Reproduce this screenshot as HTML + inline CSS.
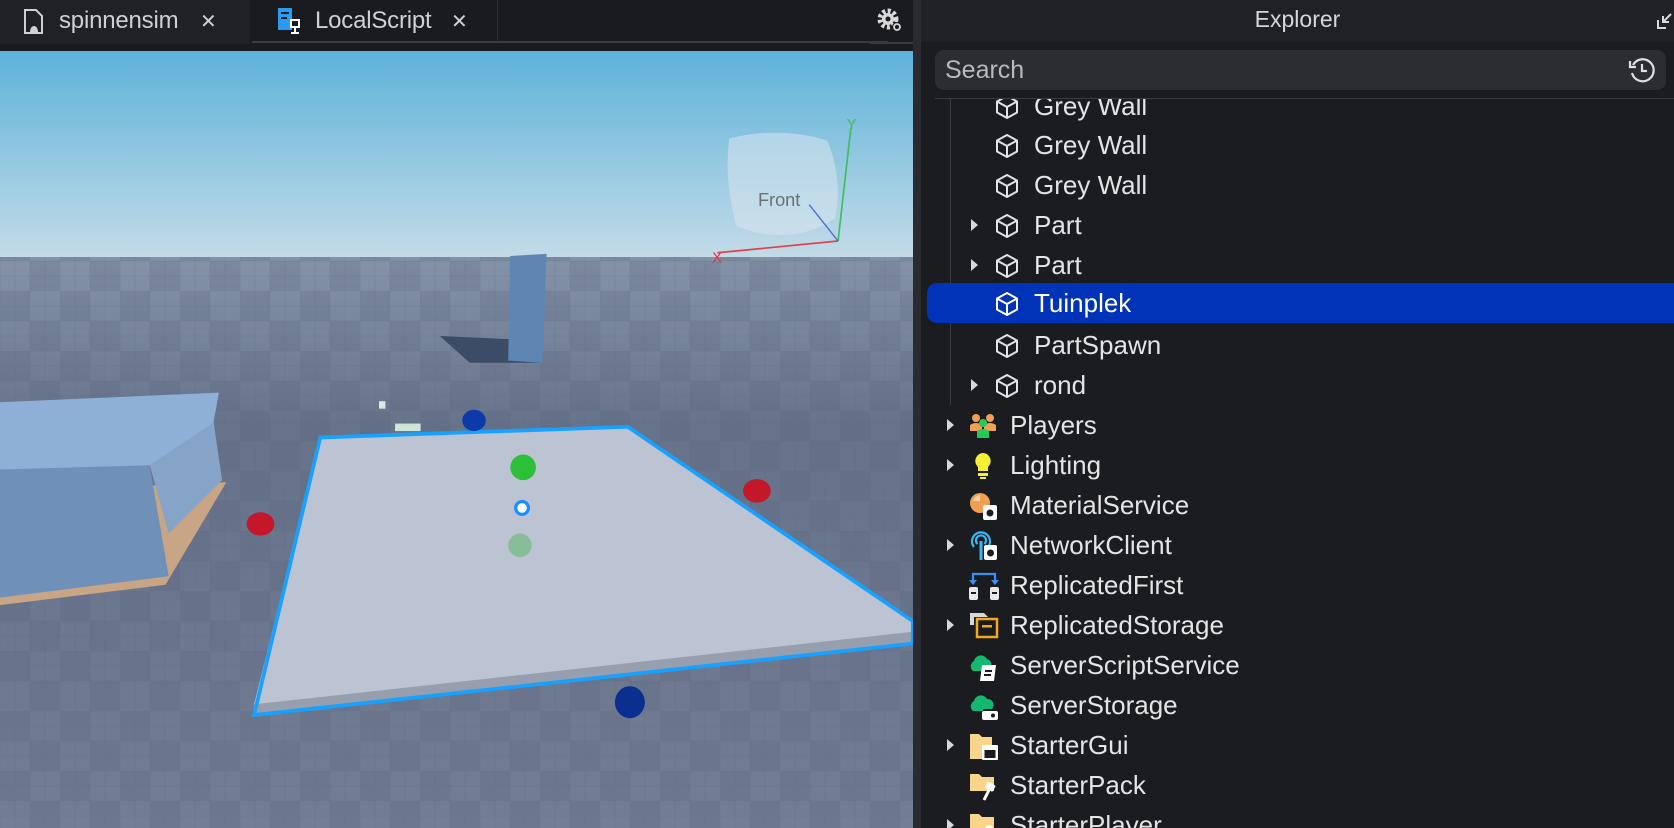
<!DOCTYPE html>
<html><head><meta charset="utf-8"><style>
*{margin:0;padding:0;box-sizing:border-box}
body{width:1674px;height:828px;overflow:hidden;background:#1b1c20;font-family:"Liberation Sans",sans-serif;color:#e6e6e8;position:relative}
.tabbar{position:absolute;left:0;top:0;width:916px;height:51px;background:#1a1b1f}
.tab1{position:absolute;left:0;top:0;width:250px;height:44px;background:#202126}
.tabline{position:absolute;left:252px;top:41px;width:636px;height:2px;background:#3a3b40}
.tabline2{position:absolute;left:870px;top:42px;width:44px;height:2px;background:#3a3b40}
.tt{position:absolute;top:7px;font-size:24px;color:#cfd0d4;letter-spacing:-0.2px}
.vp{position:absolute;left:0;top:51px;width:913px;height:777px}
.sep{position:absolute;left:913px;top:0;width:8px;height:828px;background:#2a2b30}
.ex{position:absolute;left:921px;top:0;width:753px;height:828px;background:#1b1c20}
.exh{position:absolute;left:0;top:0;width:753px;height:42px;background:#202126;text-align:center;font-size:23px;line-height:38px;color:#d6d6da}
.search{position:absolute;left:14px;top:50px;width:731px;height:40px;background:#2c2d33;border-radius:9px;font-size:25px;line-height:40px;padding-left:10px;color:#b8b9bd}
.div{position:absolute;left:14px;top:98px;width:739px;height:1px;background:#3a3b40}
.guide{position:absolute;left:29px;top:99px;width:1px;height:306px;background:#3a3b40}
.row{position:absolute;left:0;height:40px;width:753px;font-size:26px;line-height:40px;color:#e4e4e6;letter-spacing:0}
.sel{background:#0033b8;border-radius:10px 0 0 10px;left:6px;width:747px}
.row .t{position:absolute;top:0}
.row svg{position:absolute}
.arr{position:absolute;width:0;height:0;border-top:6px solid transparent;border-bottom:6px solid transparent;border-left:7px solid #d8d8da;top:14px}
</style></head><body>
<div class="tabbar"></div>
<div class="tab1"></div>
<div class="tabline"></div><div class="tabline2"></div>
<svg style="position:absolute;left:22px;top:8px" width="24" height="28" viewBox="0 0 24 28"><path d="M3 2h11l6 6v17H3z" fill="none" stroke="#d0d0d4" stroke-width="2"/><path d="M8 24c0-4 2-6 4-6s4 2 4 6z" fill="#d0d0d4"/></svg>
<div class="tt" style="left:59px">spinnensim</div>
<div class="tt" style="left:200px;font-size:20px;top:9px">✕</div>
<svg style="position:absolute;left:276px;top:6px" width="30" height="30" viewBox="0 0 30 30"><rect x="2" y="2" width="14" height="22" fill="#2a9bf0"/><rect x="5" y="6" width="8" height="2" fill="#1a1b1f"/><rect x="5" y="11" width="6" height="2" fill="#1a1b1f"/><rect x="14" y="13" width="10" height="9" fill="#fff"/><rect x="16" y="15" width="6" height="5" fill="#1a1b1f"/><rect x="18" y="22" width="2" height="5" fill="#fff"/><rect x="15" y="26" width="8" height="2" fill="#fff"/></svg>
<div class="tt" style="left:315px">LocalScript</div>
<div class="tt" style="left:451px;font-size:20px;top:9px">✕</div>
<div style="position:absolute;left:497px;top:0;width:1px;height:42px;background:#2e2f34"></div>
<svg style="position:absolute;left:876px;top:6px" width="30" height="28" viewBox="0 0 30 28"><circle cx="12" cy="13" r="8" fill="none" stroke="#d8d8da" stroke-width="5" stroke-dasharray="3 2.3"/><circle cx="12" cy="13" r="6" fill="#d8d8da"/><circle cx="12" cy="13" r="2.5" fill="#1a1b1f"/><circle cx="21" cy="21" r="5" fill="#1a1b1f"/><circle cx="21" cy="21" r="3" fill="none" stroke="#d8d8da" stroke-width="1.8"/></svg>

<svg class="vp" viewBox="0 0 913 777">
<defs>
<linearGradient id="sky" x1="0" y1="0" x2="0" y2="1"><stop offset="0" stop-color="#5eb2da"/><stop offset="1" stop-color="#c3dbe7"/></linearGradient>
<linearGradient id="gr" x1="0" y1="0" x2="0" y2="1"><stop offset="0" stop-color="#8593a8"/><stop offset="0.3" stop-color="#66738a"/><stop offset="1" stop-color="#737d94"/></linearGradient>
<pattern id="grid" width="60" height="60" patternUnits="userSpaceOnUse"><rect width="30" height="30" fill="#55617a" opacity="0.35"/><rect x="30" y="30" width="30" height="30" fill="#55617a" opacity="0.35"/><path d="M0 0H60M0 15H60M0 30H60M0 45H60M0 0V60M15 0V60M30 0V60M45 0V60" stroke="#5a6680" stroke-width="1" opacity="0.35"/></pattern>
</defs>
<rect width="913" height="206" fill="url(#sky)"/>
<rect y="206" width="913" height="571" fill="url(#gr)"/>
<rect y="206" width="913" height="571" fill="url(#grid)" opacity="0.6"/>
<g transform="translate(0,-51.25) scale(1.0676)">
<polygon points="0,470 140,455 212,452 155,548 0,567" fill="#c7a585"/>
<polygon points="0,440 140,435 158,540 0,560" fill="#6f90b8"/>
<polygon points="140,435 200,395 208,450 158,500" fill="#86a4c8"/>
<polygon points="0,377 205,368 200,396 140,436 0,440" fill="#8fb0d6"/>
<polygon points="412,315 478,318 505,340 440,340" fill="#3c4b66"/>
<polygon points="478,240 512,238 508,340 476,338" fill="#5f85b3"/>
<rect x="355" y="376" width="6" height="7" fill="#d8ecdf"/>
<rect x="370" y="397" width="24" height="7" fill="#cfe6d6"/>
<polygon points="238,660 855,590 855,603 238,670" fill="#979fae"/>
<polygon points="300,410 588,400 855,582 855,592 238,660" fill="#bcc3d3"/>
<polygon points="300,410 588,400 855,582 855,603 238,670" fill="none" stroke="#17a2ff" stroke-width="3.5"/>
<ellipse cx="444" cy="394" rx="11" ry="10" fill="#0c3aa8"/>
<circle cx="490" cy="438" r="12" fill="#2cbf38"/>
<circle cx="489" cy="476" r="6" fill="#fff" stroke="#1a8fff" stroke-width="3"/>
<circle cx="487" cy="511" r="11" fill="#87bd98"/>
<ellipse cx="244" cy="491" rx="13" ry="11" fill="#c4172a"/>
<ellipse cx="709" cy="460" rx="13" ry="11" fill="#c4172a"/>
<ellipse cx="590" cy="658" rx="14" ry="15" fill="#0a2f8f"/>
<path d="M683 130 Q730 118 775 132 Q790 170 782 205 Q740 232 690 212 Q678 170 683 130z" fill="#d8e6ee" opacity="0.55"/>
<text x="710" y="193" font-size="17" fill="#6b6f76" font-family="Liberation Sans">Front</text>
<line x1="672" y1="237" x2="785" y2="226" stroke="#e04050" stroke-width="1.6"/>
<line x1="785" y1="226" x2="797" y2="120" stroke="#3ec060" stroke-width="1.6"/>
<line x1="785" y1="226" x2="758" y2="192" stroke="#5070d0" stroke-width="1.3"/>
<text x="667" y="246" font-size="14" fill="#e03040">X</text>
<text x="793" y="121" font-size="14" fill="#3ec060">Y</text>
</g>
</svg>
<div class="sep"></div>

<div class="ex">
<div class="exh">Explorer</div>
<svg style="position:absolute;right:2px;top:12px" width="16" height="18" viewBox="0 0 16 18"><path d="M2 8v8h8" fill="none" stroke="#d8d8da" stroke-width="2"/><path d="M15 2L7 10M7 4v6h6" fill="none" stroke="#d8d8da" stroke-width="2"/></svg>
<div class="search">Search
<svg style="position:absolute;right:10px;top:6px" width="28" height="28" viewBox="0 0 28 28"><path d="M5 9A11 11 0 1 1 4 17" fill="none" stroke="#e0e0e2" stroke-width="2.2"/><path d="M2 5v6h6" fill="none" stroke="#e0e0e2" stroke-width="2.2"/><path d="M14 8v7h5" fill="none" stroke="#e0e0e2" stroke-width="2.2"/></svg></div>
<div class="div"></div>
<div class="guide"></div>

<div style="position:absolute;left:0;top:99px;width:753px;height:729px;overflow:hidden">
<div style="position:relative;top:-99px">
<div class="row" style="top:86px"><svg style="left:74px;top:8px" width="24" height="26" viewBox="0 0 24 26"><path d="M12 2L22 7.5V18.5L12 24L2 18.5V7.5z M2 7.5L12 13L22 7.5 M12 13V24" fill="none" stroke="#e4e4e6" stroke-width="2" stroke-linejoin="round"/></svg><span class="t" style="left:113px">Grey Wall</span></div>
<div class="row" style="top:125px"><svg style="left:74px;top:8px" width="24" height="26" viewBox="0 0 24 26"><path d="M12 2L22 7.5V18.5L12 24L2 18.5V7.5z M2 7.5L12 13L22 7.5 M12 13V24" fill="none" stroke="#e4e4e6" stroke-width="2" stroke-linejoin="round"/></svg><span class="t" style="left:113px">Grey Wall</span></div>
<div class="row" style="top:165px"><svg style="left:74px;top:8px" width="24" height="26" viewBox="0 0 24 26"><path d="M12 2L22 7.5V18.5L12 24L2 18.5V7.5z M2 7.5L12 13L22 7.5 M12 13V24" fill="none" stroke="#e4e4e6" stroke-width="2" stroke-linejoin="round"/></svg><span class="t" style="left:113px">Grey Wall</span></div>
<div class="row" style="top:205px"><div class="arr" style="left:50px"></div><svg style="left:74px;top:8px" width="24" height="26" viewBox="0 0 24 26"><path d="M12 2L22 7.5V18.5L12 24L2 18.5V7.5z M2 7.5L12 13L22 7.5 M12 13V24" fill="none" stroke="#e4e4e6" stroke-width="2" stroke-linejoin="round"/></svg><span class="t" style="left:113px">Part</span></div>
<div class="row" style="top:245px"><div class="arr" style="left:50px"></div><svg style="left:74px;top:8px" width="24" height="26" viewBox="0 0 24 26"><path d="M12 2L22 7.5V18.5L12 24L2 18.5V7.5z M2 7.5L12 13L22 7.5 M12 13V24" fill="none" stroke="#e4e4e6" stroke-width="2" stroke-linejoin="round"/></svg><span class="t" style="left:113px">Part</span></div>
<div class="row sel" style="top:283px"><svg style="left:68px;top:8px" width="24" height="26" viewBox="0 0 24 26"><path d="M12 2L22 7.5V18.5L12 24L2 18.5V7.5z M2 7.5L12 13L22 7.5 M12 13V24" fill="none" stroke="#fff" stroke-width="2" stroke-linejoin="round"/></svg><span class="t" style="left:107px;color:#fff">Tuinplek</span></div>
<div class="row" style="top:325px"><svg style="left:74px;top:8px" width="24" height="26" viewBox="0 0 24 26"><path d="M12 2L22 7.5V18.5L12 24L2 18.5V7.5z M2 7.5L12 13L22 7.5 M12 13V24" fill="none" stroke="#e4e4e6" stroke-width="2" stroke-linejoin="round"/></svg><span class="t" style="left:113px">PartSpawn</span></div>
<div class="row" style="top:365px"><div class="arr" style="left:50px"></div><svg style="left:74px;top:8px" width="24" height="26" viewBox="0 0 24 26"><path d="M12 2L22 7.5V18.5L12 24L2 18.5V7.5z M2 7.5L12 13L22 7.5 M12 13V24" fill="none" stroke="#e4e4e6" stroke-width="2" stroke-linejoin="round"/></svg><span class="t" style="left:113px">rond</span></div>

<div class="row" style="top:405px"><div class="arr" style="left:26px"></div><svg style="left:48px;top:8px" width="28" height="26" viewBox="0 0 28 26"><circle cx="7" cy="5" r="4" fill="#f0a050"/><circle cx="21" cy="5" r="4" fill="#f0a050"/><path d="M1 18v-6q6-4 12 0v6z M15 18v-6q6-4 12 0v6z" fill="#f0a050"/><circle cx="14" cy="10" r="4" fill="#22cc55"/><path d="M8 25v-7q6-4 12 0v7z" fill="#22cc55"/></svg><span class="t" style="left:89px">Players</span></div>
<div class="row" style="top:445px"><div class="arr" style="left:26px"></div><svg style="left:48px;top:6px" width="28" height="30" viewBox="0 0 28 30"><path d="M14 2a8 8 0 0 0-5 14v4h10v-4a8 8 0 0 0-5-14z" fill="#f5f035"/><rect x="9" y="22" width="10" height="3" fill="#f5f035"/><rect x="11" y="26" width="6" height="2" fill="#f5f035"/></svg><span class="t" style="left:89px">Lighting</span></div>
<div class="row" style="top:485px"><svg style="left:48px;top:6px" width="30" height="30" viewBox="0 0 30 30"><circle cx="11" cy="12" r="10" fill="#f0a050"/><path d="M11 4a8 8 0 0 0-7 6h7z" fill="#fff" opacity="0.5"/><rect x="14" y="14" width="14" height="15" rx="2" fill="#fff"/><circle cx="21" cy="22" r="3.5" fill="#1b1c20"/></svg><span class="t" style="left:89px">MaterialService</span></div>
<div class="row" style="top:525px"><div class="arr" style="left:26px"></div><svg style="left:48px;top:6px" width="30" height="30" viewBox="0 0 30 30"><path d="M5 16a9 9 0 1 1 14 0 M8.5 13a5 5 0 1 1 7 0" fill="none" stroke="#38b8f0" stroke-width="2.2"/><rect x="10.5" y="10" width="3" height="19" fill="#38b8f0"/><rect x="15" y="14" width="13" height="15" rx="2" fill="#fff"/><circle cx="21.5" cy="22" r="3.5" fill="#1b1c20"/></svg><span class="t" style="left:89px">NetworkClient</span></div>
<div class="row" style="top:565px"><svg style="left:48px;top:6px" width="30" height="30" viewBox="0 0 30 30"><path d="M4 10V3h22v7" fill="none" stroke="#3d8ef0" stroke-width="2.2"/><path d="M0 9h8l-4 5z M22 9h8l-4 5z" fill="#3d8ef0"/><rect x="0" y="16" width="9" height="13" rx="2" fill="#e8e8ea"/><rect x="21" y="16" width="9" height="13" rx="2" fill="#e8e8ea"/><rect x="2" y="21" width="5" height="2" fill="#1b1c20"/><rect x="23" y="21" width="5" height="2" fill="#1b1c20"/></svg><span class="t" style="left:89px">ReplicatedFirst</span></div>
<div class="row" style="top:605px"><div class="arr" style="left:26px"></div><svg style="left:48px;top:6px" width="30" height="30" viewBox="0 0 30 30"><path d="M1 2h14l4 4H5v8H1z" fill="#d8d8da"/><path d="M8 8h20v18H8z" fill="none" stroke="#f5a623" stroke-width="2.5"/><rect x="13" y="14" width="10" height="2.5" fill="#f5a623"/></svg><span class="t" style="left:89px">ReplicatedStorage</span></div>
<div class="row" style="top:645px"><svg style="left:48px;top:6px" width="30" height="30" viewBox="0 0 30 30"><path d="M4 20a6 6 0 0 1 1-10a7 7 0 0 1 13-2a6 6 0 0 1 4 8H14v4z" fill="#14b870"/><path d="M13 14h14l-2 16H11z" fill="#fff"/><rect x="16" y="19" width="7" height="2" fill="#1b1c20"/><rect x="15" y="23" width="7" height="2" fill="#1b1c20"/></svg><span class="t" style="left:89px">ServerScriptService</span></div>
<div class="row" style="top:685px"><svg style="left:48px;top:6px" width="30" height="30" viewBox="0 0 30 30"><path d="M4 20a6 6 0 0 1 1-10a7 7 0 0 1 13-2a6 6 0 0 1 5 10H14v2z" fill="#14b870"/><rect x="13" y="20" width="16" height="9" rx="2" fill="#fff"/><circle cx="24" cy="24.5" r="2" fill="#1b1c20"/></svg><span class="t" style="left:89px">ServerStorage</span></div>
<div class="row" style="top:725px"><div class="arr" style="left:26px"></div><svg style="left:48px;top:6px" width="30" height="30" viewBox="0 0 30 30"><path d="M1 3h9l3 3h10v9H1z" fill="#f8d58a"/><path d="M1 14h12v14H1z" fill="#f8d58a"/><rect x="13" y="14" width="16" height="15" rx="1" fill="#fff"/><rect x="15.5" y="19" width="11" height="8" fill="#1b1c20"/></svg><span class="t" style="left:89px">StarterGui</span></div>
<div class="row" style="top:765px"><svg style="left:48px;top:6px" width="30" height="30" viewBox="0 0 30 30"><path d="M1 3h9l3 3h12v14H1z" fill="#f8d58a"/><path d="M15 29l5-10" stroke="#fff" stroke-width="3"/><rect x="17" y="12" width="9" height="7" rx="1" transform="rotate(30 21 15)" fill="#fff"/></svg><span class="t" style="left:89px">StarterPack</span></div>
<div class="row" style="top:805px"><div class="arr" style="left:26px"></div><svg style="left:48px;top:6px" width="30" height="30" viewBox="0 0 30 30"><path d="M1 3h9l3 3h12v20H1z" fill="#f8d58a"/><circle cx="20" cy="18" r="4" fill="#fff"/></svg><span class="t" style="left:89px">StarterPlayer</span></div>
</div></div>
</div>
</body></html>
